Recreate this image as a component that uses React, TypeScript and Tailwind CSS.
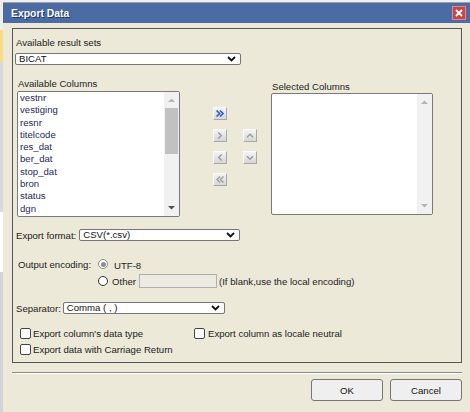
import React from "react";

const Chevron = () => (
  <svg width="9" height="6" viewBox="0 0 9 6" className="shrink-0">
    <polyline points="1,1 4.5,4.5 8,1" fill="none" stroke="#111" strokeWidth="1.8" />
  </svg>
);

function Select({ value, w }: { value: string; w: string }) {
  return (
    <div className={`${w} h-[12px] bg-white border border-[#767676] rounded-[2px] flex items-center justify-between pl-[3px] pr-[4px]`}>
      <span className="leading-[10px] text-[#111]">{value}</span>
      <Chevron />
    </div>
  );
}

function ArrowBtn({ kind, active }: { kind: string; active?: boolean }) {
  const c = active ? "#2f5fcf" : "#9a9a9a";
  let d = "";
  if (kind === "rr") d = "M3,3 L6.5,6.5 L3,10 M7,3 L10.5,6.5 L7,10";
  if (kind === "r") d = "M5,3 L8.5,6.5 L5,10";
  if (kind === "l") d = "M9,3 L5.5,6.5 L9,10";
  if (kind === "ll") d = "M7,3 L3.5,6.5 L7,10 M11,3 L7.5,6.5 L11,10";
  if (kind === "u") d = "M3.5,8.5 L7,5 L10.5,8.5";
  if (kind === "d") d = "M3.5,5 L7,8.5 L10.5,5";
  return (
    <div className="w-[14px] h-[13px] bg-gradient-to-b from-[#f4f4f4] to-[#d6d6d6] border-r border-b border-[#a8a8a8] border-t border-l border-t-[#fafafa] border-l-[#fafafa] flex items-center justify-center">
      <svg width="14" height="13" viewBox="0 0 14 13">
        <path d={d} fill="none" stroke={c} strokeWidth={active ? 2 : 1.6} />
      </svg>
    </div>
  );
}

function Scrollbar({ thumb }: { thumb: boolean }) {
  return (
    <div className="w-[15px] h-full bg-[#f1f1f1] flex flex-col items-center">
      <svg width="9" height="10" viewBox="0 0 9 10" className="mt-[3px]">
        <path d="M1,7 L4.5,3.5 L8,7 Z" fill="#b5b5b5" />
      </svg>
      {thumb ? <div className="mt-[3px] w-[13px] h-[46px] bg-[#c1c1c1]" /> : null}
      <div className="flex-1" />
      <svg width="9" height="10" viewBox="0 0 9 10" className="mb-[3px]">
        <path d="M1,3 L4.5,6.5 L8,3 Z" fill={thumb ? "#505050" : "#b5b5b5"} />
      </svg>
    </div>
  );
}

const items = ["vestnr", "vestiging", "resnr", "titelcode", "res_dat", "ber_dat", "stop_dat", "bron", "status", "dgn"];

export default function App() {
  return (
    <div className="w-[470px] h-[412px] overflow-hidden bg-[#eeeeee] flex font-['Liberation_Sans',Arial,sans-serif] text-[9.6px] leading-[11px] text-[#222]">
      <div className="w-[3px] flex flex-col">
        <div className="h-[30px] bg-[#eeeeee]" />
        <div className="h-[32px] bg-[#f8dc8a]" />
        <div className="h-[150px] bg-[#d9d9d9]" />
        <div className="h-[60px] bg-white" />
        <div className="flex-1 bg-[#d4d4d4]" />
      </div>
      <div className="flex-1 flex flex-col pt-[2px]">
        <div className="flex-1 flex flex-col border-t border-[#a0a0a0] bg-[#ece9d8]">
          <div className="h-[20px] bg-[#4a6ba4] flex items-center justify-between pl-[8px] pr-[4px]">
            <span className="text-white font-bold text-[10.4px] [text-shadow:1px_1px_0_#1e3560]">Export Data</span>
            <div className="w-[14px] h-[14px] bg-[#c5474a] border border-[#e08a8a] flex items-center justify-center">
              <svg width="10" height="10" viewBox="0 0 10 10">
                <path d="M2,2 L8,8 M8,2 L2,8" stroke="white" strokeWidth="1.8" />
              </svg>
            </div>
          </div>
          <div className="pl-[9px] pr-[8px] pt-[5px] flex flex-col">
            <div className="h-[335px] border border-[#555] flex flex-col">
              <div className="ml-[3px] mt-[8px]">Available result sets</div>
              <div className="ml-[2px] mt-[5px]">
                <Select value="BICAT" w="w-[226px]" />
              </div>
              <div className="mt-[13px] flex items-start">
                <div className="ml-[4px] w-[163px] flex flex-col">
                  <div className="pl-[1px] h-[11px]">Available Columns</div>
                  <div className="mt-[2px] h-[126px] bg-white border border-[#7a7a7a] rounded-[2px] flex overflow-hidden">
                    <div className="flex-1 pl-[2px] flex flex-col text-[#1e2a5a] leading-[12.3px]">
                      {items.map((it) => (
                        <div key={it}>{it}</div>
                      ))}
                    </div>
                    <Scrollbar thumb={true} />
                  </div>
                </div>
                <div className="ml-[33px] mt-[29px] flex flex-col gap-[9px]">
                  <ArrowBtn kind="rr" active />
                  <ArrowBtn kind="r" />
                  <ArrowBtn kind="l" />
                  <ArrowBtn kind="ll" />
                </div>
                <div className="ml-[16px] mt-[51px] flex flex-col gap-[9px]">
                  <ArrowBtn kind="u" />
                  <ArrowBtn kind="d" />
                </div>
                <div className="ml-[14px] mt-[3px] w-[162px] flex flex-col">
                  <div className="pl-[1px] h-[11px]">Selected Columns</div>
                  <div className="mt-[1px] h-[122px] bg-white border border-[#7a7a7a] rounded-[2px] flex justify-end overflow-hidden">
                    <Scrollbar thumb={false} />
                  </div>
                </div>
              </div>
              <div className="mt-[12px] ml-[3px] flex items-center">
                <span>Export format:</span>
                <div className="ml-[3px]">
                  <Select value="CSV(*.csv)" w="w-[161px]" />
                </div>
              </div>
              <div className="mt-[16px] ml-[5px] flex items-start">
                <div className="w-[80px] pt-[2px]">Output encoding:</div>
                <div className="flex flex-col gap-[3px]">
                  <div className="h-[14px] flex items-center">
                    <div className="w-[10px] h-[10px] rounded-full border-[1.5px] border-[#8d8d8d] bg-white flex items-center justify-center">
                      <div className="w-[5px] h-[5px] rounded-full bg-[#8d8d8d]" />
                    </div>
                    <span className="ml-[6px] mt-[3px]">UTF-8</span>
                  </div>
                  <div className="h-[14px] flex items-center">
                    <div className="w-[10px] h-[10px] rounded-full border border-[#333] bg-white" />
                    <span className="ml-[4px]">Other</span>
                    <div className="ml-[3px] w-[78px] h-[14px] bg-[#eceae2] border border-[#b0b0b0]" />
                    <span className="ml-[2px]">(If blank,use the local encoding)</span>
                  </div>
                </div>
              </div>
              <div className="mt-[14px] ml-[3px] flex items-center">
                <span>Separator:</span>
                <div className="ml-[2px]">
                  <Select value="Comma ( , )" w="w-[162px]" />
                </div>
              </div>
              <div className="mt-[14px] ml-[7px] flex items-center h-[11px]">
                <div className="w-[174px] flex items-center">
                  <div className="w-[11px] h-[11px] border border-[#444] rounded-[2px] bg-white" />
                  <span className="ml-[2px]">Export column's data type</span>
                </div>
                <div className="w-[11px] h-[11px] border border-[#444] rounded-[2px] bg-white" />
                <span className="ml-[3px]">Export column as locale neutral</span>
              </div>
              <div className="mt-[5px] ml-[7px] flex items-center h-[11px]">
                <div className="w-[11px] h-[11px] border border-[#444] rounded-[2px] bg-white" />
                <span className="ml-[2px]">Export data with Carriage Return</span>
              </div>
            </div>
            <div className="mt-[9px] h-px bg-[#8a8a8a]" />
            <div className="h-px bg-white" />
            <div className="mt-[5px] flex justify-end gap-[7px]">
              <div className="w-[72px] h-[22px] bg-[#efefef] border border-[#767676] rounded-[3px] flex items-center justify-center text-[#111]">OK</div>
              <div className="w-[72px] h-[22px] bg-[#efefef] border border-[#767676] rounded-[3px] flex items-center justify-center text-[#111]">Cancel</div>
            </div>
          </div>
        </div>
      </div>
    </div>
  );
}
